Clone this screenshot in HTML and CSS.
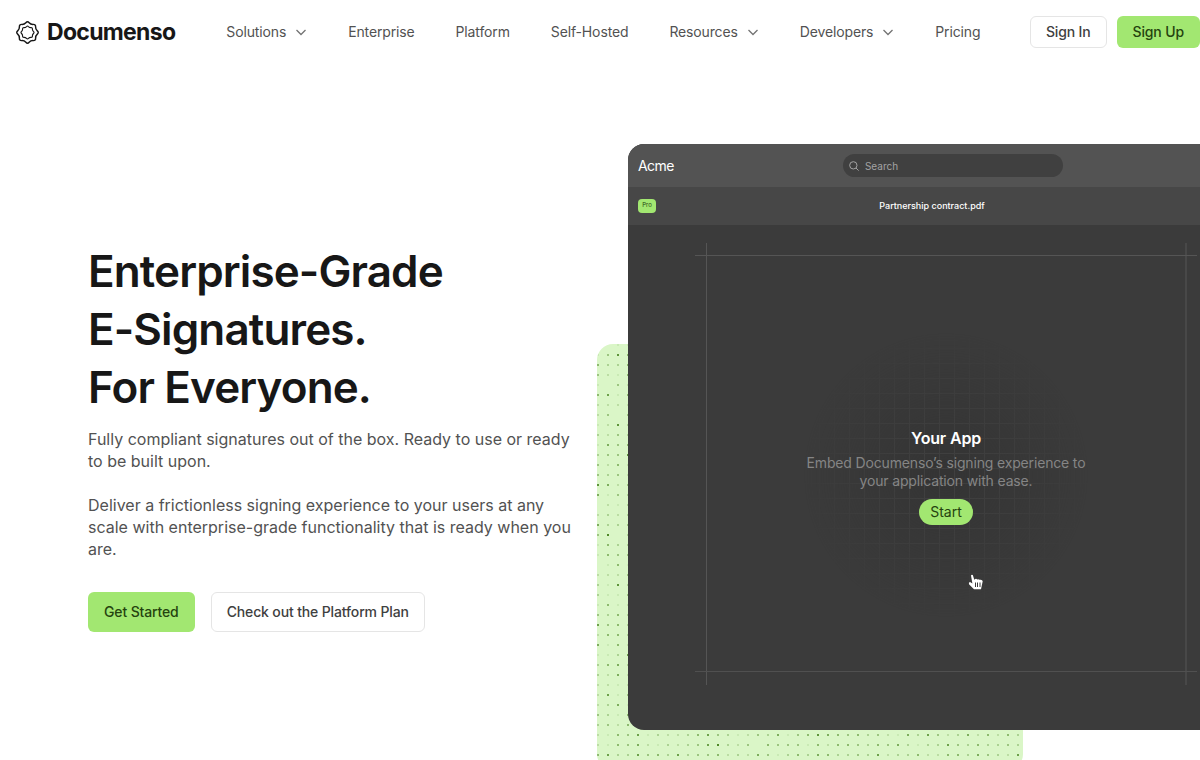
FILE: index.html
```
<!DOCTYPE html>
<html lang="en">
<head>
    <meta charset="UTF-8">
    <meta name="viewport" content="width=device-width, initial-scale=1.0">
    <title>Documenso</title>
    <link rel="stylesheet" href="styles.css">
</head>
<body>

    <header class="header">
        <a href="#" class="logo">
            <svg class="logo-mark" viewBox="-12 -12 24 24">
                <path d="M10.25 1.7Q8.3 3.4 8.45 6Q8.6 8.6 6 8.45Q3.4 8.3 1.7 10.25Q0 12.2 -1.7 10.25Q-3.4 8.3 -6 8.45Q-8.6 8.6 -8.45 6Q-8.3 3.4 -10.25 1.7Q-12.2 0 -10.25 -1.7Q-8.3 -3.4 -8.45 -6Q-8.6 -8.6 -6 -8.45Q-3.4 -8.3 -1.7 -10.25Q0 -12.2 1.7 -10.25Q3.4 -8.3 6 -8.45Q8.6 -8.6 8.45 -6Q8.3 -3.4 10.25 -1.7Q12.2 0 10.25 1.7Z" stroke-width="1.5"/>
                <path d="M6.2 1Q5.1 2 5.1 3.6Q5.2 5.2 3.6 5.1Q2 5.1 1 6.2Q0 7.4 -1 6.2Q-2 5.1 -3.6 5.1Q-5.2 5.2 -5.1 3.6Q-5.1 2 -6.2 1Q-7.4 0 -6.2 -1Q-5.1 -2 -5.1 -3.6Q-5.2 -5.2 -3.6 -5.1Q-2 -5.1 -1 -6.2Q0 -7.4 1 -6.2Q2 -5.1 3.6 -5.1Q5.2 -5.2 5.1 -3.6Q5.1 -2 6.2 -1Q7.4 0 6.2 1Z" stroke-width="1.2"/>
            </svg>
            <span>Documenso</span>
        </a>
        <nav class="nav">
            <a href="#">Solutions <svg class="chevron" viewBox="0 0 12 12"><path d="M1.5 4L6 8.5L10.5 4"/></svg></a>
            <a href="#">Enterprise</a>
            <a href="#">Platform</a>
            <a href="#">Self-Hosted</a>
            <a href="#">Resources <svg class="chevron" viewBox="0 0 12 12"><path d="M1.5 4L6 8.5L10.5 4"/></svg></a>
            <a href="#">Developers <svg class="chevron" viewBox="0 0 12 12"><path d="M1.5 4L6 8.5L10.5 4"/></svg></a>
            <a href="#">Pricing</a>
        </nav>
        <div class="account">
            <button type="button" class="btn btn-outline">Sign In</button>
            <button type="button" class="btn btn-green">Sign Up</button>
        </div>
    </header>

    <main class="hero">
        <section class="copy">
            <h1>Enterprise-Grade<br>E-Signatures.<br>For Everyone.</h1>
            <p>Fully compliant signatures out of the box. Ready to use or ready to be built upon.</p>
            <p>Deliver a frictionless signing experience to your users at any scale with enterprise-grade functionality that is ready when you are.</p>
            <div class="actions">
                <button type="button" class="btn btn-large btn-green">Get Started</button>
                <button type="button" class="btn btn-large btn-outline">Check out the Platform Plan</button>
            </div>
        </section>

        <section class="demo">
            <svg class="dots" id="dots"></svg>
            <div class="app">
                <div class="app-bar">
                    <span class="app-name">Acme</span>
                    <label class="search">
                        <svg viewBox="0 0 12 12"><circle cx="5.2" cy="5.2" r="4.4"/><path d="M8.4 8.4L11.5 11.5"/></svg>
                        <input type="text" placeholder="Search" aria-label="Search">
                    </label>
                    <span class="app-user"></span>
                </div>
                <div class="file-bar">
                    <span class="badge">Pro</span>
                    <span class="file-name">Partnership contract.pdf</span>
                    <span class="file-tools"></span>
                </div>
                <div class="stage">
                    <div class="frame"></div>
                    <div class="glow"></div>
                    <div class="embed">
                        <h2>Your App</h2>
                        <p>Embed Documenso’s signing experience to your application with ease.</p>
                        <button type="button" class="start">Start</button>
                    </div>
                    <svg class="cursor" viewBox="0 0 15 17">
                        <path d="M3 1.5Q3.6 0.2 4.8 1L6.3 5.8L7.2 5Q8.4 4.4 9.2 5.4Q10.6 4.8 11.6 5.8Q14.4 5.2 14.7 7.3L13.8 11.5L13 15.3H6L1 10.2Q.3 8.4 2 8.1L4.4 9.4Z" fill="#fff"/>
                        <path d="M7.5 8.5V13M9.5 8.5V13M12 8.5V13" stroke="#3a3a3a" stroke-width="1"/>
                    </svg>
                </div>
            </div>
        </section>
    </main>

    <script>
        // strength of each dot, 0-9, one string per row
        var rows = [
            "0011", "1485", "5335", "4215", "1042", "5715", "2222", "2404", "1283",
            "3243", "1645", "3448", "4252", "4342", "8624", "6143", "0213", "2323",
            "6334", "4903", "1533", "1544", "0151", "2224", "3183", "3114", "1512",
            "4353", "7453", "2553", "6152", "1137", "3563", "3262", "2212", "2714",
            "2361", "4315", "3425",
            "2154713223574312436145865453421637423625253",
            "2154621323479324054441525543546313374353343",
            "5733745373445232641353653343723352255364327"
        ];
        var svg = document.getElementById("dots");
        rows.forEach(function(row, y) {
            for (var x = 0; x < row.length; x++) {
                var dot = document.createElementNS("http://www.w3.org/2000/svg", "rect");
                dot.setAttribute("x", x * 10);
                dot.setAttribute("y", y * 10);
                dot.setAttribute("width", 2);
                dot.setAttribute("height", 2);
                dot.setAttribute("opacity", row[x] / 10);
                svg.appendChild(dot);
            }
        });
    </script>

</body>
</html>
```
FILE: styles.css
```
* {
    margin: 0;
    padding: 0;
    box-sizing: border-box;
}
html {
    overflow: hidden;
}
body {
    font-family: Inter, sans-serif;
    background-color: #fff;
    color: #171717;
    overflow: hidden;
}
a {
    color: inherit;
    text-decoration: none;
}
svg {
    fill: none;
}
.header {
    display: flex;
    align-items: center;
    height: 64px;
    padding-left: 16px;
}
.logo {
    display: flex;
    align-items: center;
    gap: 8px;
    font-size: 23px;
    font-weight: 700;
    line-height: 28px;
    letter-spacing: -0.03em;
}
.logo-mark {
    width: 23px;
    height: 23px;
    stroke: #171717;
}
.nav {
    display: flex;
    gap: 41px;
    margin-left: 51px;
    font-size: 14px;
    line-height: 20px;
    letter-spacing: -0.01em;
    color: #525252;
}
.nav a {
    display: flex;
    align-items: center;
    gap: 9px;
}
.chevron {
    width: 12px;
    height: 12px;
    stroke: #737373;
    stroke-width: 1.3;
}
.account {
    display: flex;
    gap: 10px;
    margin-left: auto;
}
.btn {
    height: 32px;
    padding: 0 15px;
    border: 1px solid transparent;
    border-radius: 6px;
    font-family: inherit;
    font-size: 14px;
    font-weight: 500;
    line-height: 20px;
    letter-spacing: -0.01em;
    white-space: nowrap;
    cursor: pointer;
}
.btn-large {
    height: 40px;
}
.btn-green {
    background-color: #a2e771;
    color: #25430f;
}
.btn-outline {
    background-color: #fff;
    border-color: #e5e5e5;
    color: #404040;
}
.hero {
    display: grid;
    grid-template-columns: 1fr 572px;
    align-items: center;
    padding: 80px 0 40px 88px;
}
.copy {
    padding-right: 48px;
}
.copy h1 {
    margin-bottom: 12px;
    font-size: 44px;
    font-weight: 600;
    line-height: 58px;
    letter-spacing: -0.02em;
}
.copy p {
    margin-bottom: 22px;
    font-size: 16px;
    line-height: 22px;
    color: #525252;
}
.actions {
    display: flex;
    gap: 16px;
    padding-top: 10px;
}
.demo {
    position: relative;
}
/* dotted card behind the app window */
.dots {
    position: absolute;
    left: -31px;
    bottom: -40px;
    width: 426px;
    height: 426px;
    border-radius: 16px;
    background-color: #daf6c7;
    fill: #3f7d16;
}
.app {
    position: relative;
    width: 636px;
    border-radius: 16px;
    background-color: #3b3b3b;
    overflow: hidden;
}
.app-bar,
.file-bar {
    display: flex;
    align-items: center;
    justify-content: space-between;
    padding: 0 10px;
}
.app-bar {
    height: 43px;
    background-color: #535353;
}
.file-bar {
    height: 38px;
    background-color: #474747;
}
.app-name {
    font-size: 14px;
    line-height: 20px;
    letter-spacing: -0.04em;
    color: #fff;
}
.search {
    display: flex;
    align-items: center;
    gap: 6px;
    width: 220px;
    height: 23px;
    padding: 0 6px;
    border-radius: 12px;
    background-color: #404040;
}
.search svg {
    width: 10px;
    height: 10px;
    stroke: #a3a3a3;
    stroke-width: 1.2;
}
.search input {
    flex: 1;
    min-width: 0;
    height: 14px;
    border: none;
    outline: none;
    background: none;
    font-family: inherit;
    font-size: 10px;
    color: #fff;
}
.search input::placeholder {
    color: #a3a3a3;
}
.app-user {
    width: 22px;
}
.file-tools {
    width: 46px;
}
.badge {
    width: 18px;
    height: 14px;
    border-radius: 4px;
    background-color: #a2e771;
    color: #25430f;
    font-size: 6px;
    line-height: 12px;
    text-align: center;
}
.file-name {
    font-size: 9px;
    font-weight: 500;
    line-height: 12px;
    color: #fff;
}
.stage {
    position: relative;
    display: flex;
    align-items: center;
    justify-content: center;
    height: 505px;
    padding-bottom: 4px;
}
/* crop marks round the drop area */
.frame {
    position: absolute;
    inset: 18px 67px 45px;
    background:
        linear-gradient(#555, #555) 0 12px / 100% 1px no-repeat,
        linear-gradient(#505050, #505050) 0 428px / 100% 1px no-repeat,
        linear-gradient(#555, #555) 11px 0 / 1px 100% no-repeat,
        linear-gradient(#484848, #484848) 490px 0 / 2px 100% no-repeat;
}
.glow {
    position: absolute;
    top: 108px;
    left: 176px;
    width: 284px;
    height: 284px;
    background:
        repeating-linear-gradient(90deg, #404040 0 1px, transparent 1px 15px),
        repeating-linear-gradient(#404040 0 1px, transparent 1px 15px),
        #343434;
    mask-image: radial-gradient(closest-side, #000, transparent);
}
.embed {
    position: relative;
    width: 300px;
    text-align: center;
    letter-spacing: -0.01em;
}
.embed h2 {
    margin-bottom: 4px;
    font-size: 16px;
    font-weight: 600;
    line-height: 24px;
    color: #fff;
}
.embed p {
    margin-bottom: 9px;
    font-size: 14px;
    line-height: 18px;
    color: #858585;
}
.start {
    display: block;
    height: 26px;
    margin: 0 auto;
    padding: 0 11px;
    border: none;
    border-radius: 13px;
    background-color: #a2e771;
    color: #25430f;
    font-family: inherit;
    font-size: 14px;
    line-height: 20px;
    cursor: pointer;
}
.cursor {
    position: absolute;
    top: 349px;
    left: 340px;
    width: 15px;
    height: 17px;
}
```
